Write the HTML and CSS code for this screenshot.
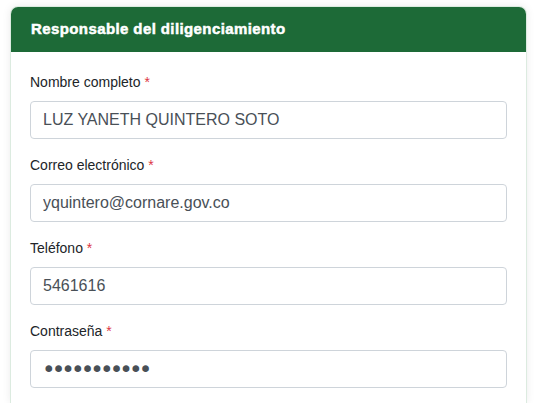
FILE: index.html
```html
<!DOCTYPE html>
<html lang="es">
<head>
<meta charset="utf-8">
<title>Responsable del diligenciamiento</title>
<link rel="stylesheet" href="styles.css">
</head>
<body>
<div class="card">
  <div class="card-header">Responsable del diligenciamiento</div>
  <div class="card-body">
    <div class="field">
      <label class="label">Nombre completo <span class="req">*</span></label>
      <input class="input" type="text" value="LUZ YANETH QUINTERO SOTO">
    </div>
    <div class="field">
      <label class="label">Correo electrónico <span class="req">*</span></label>
      <input class="input" type="email" value="yquintero@cornare.gov.co">
    </div>
    <div class="field">
      <label class="label">Teléfono <span class="req">*</span></label>
      <input class="input" type="text" value="5461616">
    </div>
    <div class="field">
      <label class="label">Contraseña <span class="req">*</span></label>
      <input class="input input-password" type="password" value="cornare2024">
    </div>
  </div>
</div>
</body>
</html>
```
FILE: styles.css
```css
html, body {
  margin: 0;
  padding: 0;
  background: #ffffff;
  height: 100%;
  overflow: hidden;
}
body {
  padding: 6px 7px 0 10px;
  font-family: "Liberation Sans", Arial, sans-serif;
  box-sizing: border-box;
}
.card {
  box-sizing: border-box;
  background: #ffffff;
  border: 1px solid #dcebe0;
  border-bottom: none;
  border-radius: 8px 8px 0 0;
  box-shadow: 0 0 8px rgba(0, 0, 0, 0.08);
  overflow: hidden;
  height: 397px;
}
.card-header {
  background: #1d6a37;
  color: #ffffff;
  font-weight: bold;
  font-size: 15px;
  line-height: 22px;
  padding: 11px 20px 12px 20px;
  letter-spacing: 0.4px;
  -webkit-text-stroke: 0.5px #ffffff;
}
.card-body {
  padding: 20px 19px 0 19px;
  display: flex;
  flex-direction: column;
  gap: 16px;
}
.field {
  display: flex;
  flex-direction: column;
}
.label {
  font-size: 14px;
  line-height: 21px;
  color: #212529;
  margin-bottom: 8px;
}
.req {
  color: #dc3545;
}
.input {
  box-sizing: border-box;
  height: 38px;
  border: 1px solid #ced4da;
  border-radius: 4px;
  padding: 0 12px;
  font-family: "Liberation Sans", Arial, sans-serif;
  font-size: 16px;
  color: #495057;
  background: #ffffff;
  outline: none;
  width: 100%;
}
.input-password {
  font-family: "DejaVu Sans", sans-serif;
  font-size: 23px;
  letter-spacing: -3.9px;
  padding-left: 11px;
}
```
